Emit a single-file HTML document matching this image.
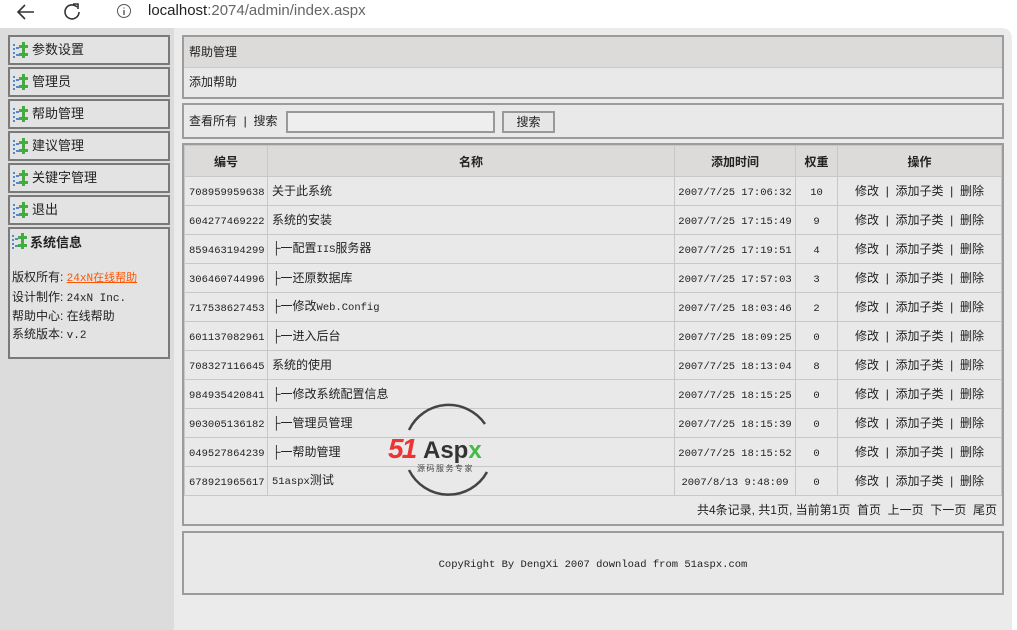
<!DOCTYPE html>
<html><head><meta charset="utf-8"><style>
*{margin:0;padding:0;box-sizing:border-box}
body{width:1017px;height:630px;overflow:hidden;background:#fff;font-family:"Liberation Sans","Noto Sans CJK SC",sans-serif;font-size:12px;color:#222;position:relative}
.bar{position:absolute;left:0;top:0;width:1017px;height:28px;background:#fff}
.left{position:absolute;left:0;top:28px;width:174px;height:602px;background:#dcdcdc}
.main{position:absolute;left:174px;top:28px;width:838px;height:602px;background:#ebebeb;border-top-right-radius:10px}
.mi{position:absolute;left:8px;width:162px;height:30px;border:2px solid #7a7a7a;background:#e3e3e3;font-size:13px;line-height:26px;padding-left:22px}
.ic{position:absolute;left:3px;top:5px;width:16px;height:16px}
.box{position:absolute;left:182px;width:822px;border:2px solid #9c9c9c;background:#e9e9e9}
table{border-collapse:collapse;width:100%;table-layout:fixed}
td{border:1px solid #c8c8c8;height:29px;font-size:12px;vertical-align:middle;line-height:14px;white-space:nowrap;overflow:hidden}
.m{font-family:"Liberation Mono",monospace;font-size:10.5px}
td.m{padding-top:4px}
th{background:#dcdbda;height:31px;font-size:12px;border:1px solid #c8c8c8;vertical-align:middle}
.c{text-align:center}
</style></head><body>
<div class="bar">
<svg style="position:absolute;left:14px;top:2px" width="24" height="20"><path d="M20 10H5M11 3L4 10l7 7" stroke="#333" stroke-width="1.6" fill="none"/></svg>
<svg style="position:absolute;left:60px;top:1px" width="24" height="20"><path d="M17 6A7 7 0 1 0 19 11" stroke="#333" stroke-width="1.6" fill="none"/><path d="M13 3h5v5" stroke="#333" stroke-width="1.6" fill="none"/></svg>
<svg style="position:absolute;left:116px;top:3px" width="16" height="16"><circle cx="8" cy="8" r="6.5" stroke="#555" fill="none"/><path d="M8 7v5M8 4.5v1" stroke="#555" stroke-width="1.4"/></svg>
<div style="position:absolute;left:148px;top:2px;font-size:15px;color:#222">localhost<span style="color:#666">:2074/admin/index.aspx</span></div>
</div>
<div class="left"></div>
<div class="main"></div>

<svg width="0" height="0" style="position:absolute"><defs><g id="ico"><rect x="0" y="2" width="2" height="2" fill="#58c"/><rect x="0" y="6" width="2" height="2" fill="#58c"/><rect x="0" y="10" width="2" height="2" fill="#58c"/><rect x="0" y="14" width="2" height="2" fill="#58c"/><rect x="3" y="5" width="3" height="2" fill="#58c"/><rect x="3" y="12" width="3" height="2" fill="#58c"/><path d="M9 0h3v3h3v3h-3v3h-3v-3h-3v-3h3z" fill="#4a4"/><path d="M9 8h3v3h3v3h-3v3h-3v-3h-3v-3h3z" fill="#4a4"/></g></defs></svg>

<div class="mi" style="top:35px"><svg class="ic"><use href="#ico"/></svg>参数设置</div>
<div class="mi" style="top:67px"><svg class="ic"><use href="#ico"/></svg>管理员</div>
<div class="mi" style="top:99px"><svg class="ic"><use href="#ico"/></svg>帮助管理</div>
<div class="mi" style="top:131px"><svg class="ic"><use href="#ico"/></svg>建议管理</div>
<div class="mi" style="top:163px"><svg class="ic"><use href="#ico"/></svg>关键字管理</div>
<div class="mi" style="top:195px"><svg class="ic"><use href="#ico"/></svg>退出</div>
<div class="mi" style="top:227px;height:132px;line-height:normal;padding:3px 0 0 20px"><svg class="ic" style="top:4px;left:2px"><use href="#ico"/></svg><b style="font-size:13px">系统信息</b>
<div style="position:absolute;left:2px;top:40px;font-size:12px;line-height:17.5px">版权所有: <span class="m" style="color:#f50;text-decoration:underline;font-size:11px">24xN在线帮助</span><br>设计制作: <span class="m" style="font-size:11px">24xN Inc.</span><br>帮助中心: 在线帮助<br>系统版本: <span class="m" style="font-size:11px">v.2</span></div></div>

<div class="box" style="top:35px;height:64px">
<div style="height:31px;background:#dcdbda;border-bottom:1px solid #c8c8c8;line-height:31px;padding-left:5px">帮助管理</div>
<div style="line-height:29px;padding-left:5px">添加帮助</div></div>
<div class="box" style="top:103px;height:36px;line-height:32px;padding-left:5px">查看所有 &nbsp;|&nbsp; 搜索
<span style="position:absolute;left:102px;top:6px;width:209px;height:22px;border:2px solid #999;background:#eee"></span>
<span style="position:absolute;left:318px;top:6px;width:53px;height:22px;border:2px solid #999;background:#e6e6e6;line-height:18px;text-align:center">搜索</span></div>

<div class="box" style="top:143px;height:383px">
<table>
<colgroup><col style="width:83px"><col><col style="width:121px"><col style="width:42px"><col style="width:164px"></colgroup>
<tr><th>编号</th><th>名称</th><th>添加时间</th><th>权重</th><th>操作</th></tr>
<tr><td class="m" style="padding-left:4px">708959959638</td><td style="padding-left:4px">关于此系统</td><td class="m c">2007/7/25 17:06:32</td><td class="m c">10</td><td class="c">修改 &nbsp;| &nbsp;添加子类 &nbsp;| &nbsp;删除</td></tr>
<tr><td class="m" style="padding-left:4px">604277469222</td><td style="padding-left:4px">系统的安装</td><td class="m c">2007/7/25 17:15:49</td><td class="m c">9</td><td class="c">修改 &nbsp;| &nbsp;添加子类 &nbsp;| &nbsp;删除</td></tr>
<tr><td class="m" style="padding-left:4px">859463194299</td><td style="padding-left:4px">├一配置<span class="m">IIS</span>服务器</td><td class="m c">2007/7/25 17:19:51</td><td class="m c">4</td><td class="c">修改 &nbsp;| &nbsp;添加子类 &nbsp;| &nbsp;删除</td></tr>
<tr><td class="m" style="padding-left:4px">306460744996</td><td style="padding-left:4px">├一还原数据库</td><td class="m c">2007/7/25 17:57:03</td><td class="m c">3</td><td class="c">修改 &nbsp;| &nbsp;添加子类 &nbsp;| &nbsp;删除</td></tr>
<tr><td class="m" style="padding-left:4px">717538627453</td><td style="padding-left:4px">├一修改<span class="m">Web.Config</span></td><td class="m c">2007/7/25 18:03:46</td><td class="m c">2</td><td class="c">修改 &nbsp;| &nbsp;添加子类 &nbsp;| &nbsp;删除</td></tr>
<tr><td class="m" style="padding-left:4px">601137082961</td><td style="padding-left:4px">├一进入后台</td><td class="m c">2007/7/25 18:09:25</td><td class="m c">0</td><td class="c">修改 &nbsp;| &nbsp;添加子类 &nbsp;| &nbsp;删除</td></tr>
<tr><td class="m" style="padding-left:4px">708327116645</td><td style="padding-left:4px">系统的使用</td><td class="m c">2007/7/25 18:13:04</td><td class="m c">8</td><td class="c">修改 &nbsp;| &nbsp;添加子类 &nbsp;| &nbsp;删除</td></tr>
<tr><td class="m" style="padding-left:4px">984935420841</td><td style="padding-left:4px">├一修改系统配置信息</td><td class="m c">2007/7/25 18:15:25</td><td class="m c">0</td><td class="c">修改 &nbsp;| &nbsp;添加子类 &nbsp;| &nbsp;删除</td></tr>
<tr><td class="m" style="padding-left:4px">903005136182</td><td style="padding-left:4px">├一管理员管理</td><td class="m c">2007/7/25 18:15:39</td><td class="m c">0</td><td class="c">修改 &nbsp;| &nbsp;添加子类 &nbsp;| &nbsp;删除</td></tr>
<tr><td class="m" style="padding-left:4px">049527864239</td><td style="padding-left:4px">├一帮助管理</td><td class="m c">2007/7/25 18:15:52</td><td class="m c">0</td><td class="c">修改 &nbsp;| &nbsp;添加子类 &nbsp;| &nbsp;删除</td></tr>
<tr><td class="m" style="padding-left:4px">678921965617</td><td style="padding-left:4px"><span class="m">51aspx</span>测试</td><td class="m c">2007/8/13 9:48:09</td><td class="m c">0</td><td class="c">修改 &nbsp;| &nbsp;添加子类 &nbsp;| &nbsp;删除</td></tr>
</table>
<div style="text-align:right;padding-right:5px;line-height:28px">共4条记录, 共1页, 当前第1页 &nbsp;首页 &nbsp;上一页 &nbsp;下一页 &nbsp;尾页</div>
</div>
<div class="box" style="top:531px;height:64px;text-align:center;line-height:60px"><span class="m">CopyRight By DengXi 2007 download from 51aspx.com</span></div>

<svg style="position:absolute;left:385px;top:400px" width="130" height="96">
<path d="M24 30A44 44 0 0 1 100 24" stroke="#444" stroke-width="2.5" fill="none"/>
<path d="M24 70A44 44 0 0 0 102 72" stroke="#444" stroke-width="2.5" fill="none"/>
<text x="3" y="58" font-family="Liberation Sans,sans-serif" font-weight="bold" font-style="italic" font-size="28" fill="#e33" letter-spacing="-2">51</text>
<text x="38" y="58" font-family="Liberation Sans,sans-serif" font-weight="bold" font-size="24" fill="#333"><tspan>Asp</tspan><tspan fill="#4b4">x</tspan></text>
<text x="32" y="71" font-family="Noto Sans CJK SC,sans-serif" font-size="8" fill="#444" letter-spacing="1.5">源码服务专家</text>
</svg>
</body></html>
